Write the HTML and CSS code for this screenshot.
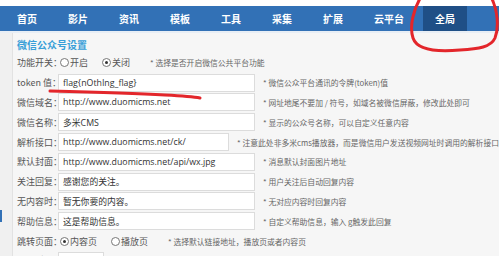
FILE: index.html
```html
<!DOCTYPE html>
<html lang="zh-CN">
<head>
    <meta charset="UTF-8">
    <meta name="viewport" content="width=device-width, initial-scale=1.0">
    <link rel="stylesheet" href="styles.css">
    <title>微信公众号设置</title>
</head>
<body>

    <div class="topbar"></div>

    <ul class="nav">
        <li>首页</li>
        <li>影片</li>
        <li>资讯</li>
        <li>模板</li>
        <li>工具</li>
        <li>采集</li>
        <li>扩展</li>
        <li>云平台</li>
        <li class="active">全局</li>
    </ul>

    <div class="main">
        <div class="side"><span class="side-mark"></span></div>

        <div class="content">
            <h3 class="title">微信公众号设置</h3>

            <div class="row">
                <label>功能开关：</label>
                <span class="radio"><i></i>开启</span>
                <span class="radio checked"><i></i>关闭</span>
                <span class="hint">* 选择是否开启微信公共平台功能</span>
            </div>
            <div class="row">
                <label>token 值：</label>
                <input type="text" value="flag{nOthIng_flag}">
                <span class="hint">* 微信公众平台通讯的令牌(token)值</span>
            </div>
            <div class="row">
                <label>微信域名：</label>
                <input type="text" value="http://www.duomicms.net">
                <span class="hint">* 网址地尾不要加 / 符号，如域名被微信屏蔽，修改此处即可</span>
            </div>
            <div class="row">
                <label>微信名称：</label>
                <input type="text" value="多米CMS">
                <span class="hint">* 显示的公众号名称，可以自定义任意内容</span>
            </div>
            <div class="row">
                <label>解析接口：</label>
                <input type="text" value="http://www.duomicms.net/ck/">
                <span class="hint">* 注意此处非多米cms播放器，而是微信用户发送视频网址时调用的解析接口</span>
            </div>
            <div class="row">
                <label>默认封面：</label>
                <input type="text" value="http://www.duomicms.net/api/wx.jpg">
                <span class="hint">* 消息默认封面图片地址</span>
            </div>
            <div class="row">
                <label>关注回复：</label>
                <input type="text" value="感谢您的关注。">
                <span class="hint">* 用户关注后自动回复内容</span>
            </div>
            <div class="row">
                <label>无内容时：</label>
                <input type="text" value="暂无你要的内容。">
                <span class="hint">* 无对应内容时回复内容</span>
            </div>
            <div class="row">
                <label>帮助信息：</label>
                <input type="text" value="这是帮助信息。">
                <span class="hint">* 自定义帮助信息，输入 g触发此回复</span>
            </div>
            <div class="row">
                <label>跳转页面：</label>
                <span class="radio checked"><i></i>内容页</span>
                <span class="radio"><i></i>播放页</span>
                <span class="hint">* 选择默认链接地址，播放页或者内容页</span>
            </div>
            <div class="row">
                <label>缓存时间：</label>
                <input type="text" class="short" value="">
                <span class="hint">* 设置回复内容缓存时间，单位为秒</span>
            </div>
        </div>
    </div>

    <svg class="marks" width="499" height="256" viewBox="0 0 499 256">
        <path d="M421,-3 C414,8 409,26 413,38 C417,50 438,52 460,50 C479,49 491,47 495,38 C499,28 498,10 491,-3" />
        <path d="M50,91 C90,92 130,93 165,95 C185,96 195,97 200,98" />
    </svg>

</body>
</html>
```

FILE: styles.css
```css
body {
    margin: 0;
    width: 499px;
    height: 256px;
    overflow: hidden;
    background-color: #f6f6f6;
    font-family: "Open Sans", "Noto Sans CJK SC", sans-serif;
    position: relative;
}

.topbar {
    height: 6px;
    background-color: #fff;
}

.nav {
    display: flex;
    gap: 7px;
    margin: 0;
    padding: 0 0 0 5px;
    height: 25px;
    list-style: none;
    background-color: #3271b6;
}

.nav li {
    padding: 0 12px;
    line-height: 25px;
    font-size: 10px;
    font-weight: bold;
    color: #fff;
    font-family: "Noto Sans CJK SC", sans-serif;
}

.nav li.active {
    background-color: #1f4f86;
}

.main {
    display: flex;
    border-top: 2px solid #e8eef5;
}

.side {
    width: 12px;
    height: 240px;
    background-color: #f0f0f0;
    border-right: 1px solid #e2e2e2;
    position: relative;
}

.side-mark {
    position: absolute;
    left: 0;
    top: 177px;
    width: 2px;
    height: 12px;
    background-color: #3271b6;
}

.content {
    flex: 1;
    padding: 5px 0 0 4px;
    white-space: nowrap;
    overflow: hidden;
}

.title {
    margin: 0 0 1px;
    font-size: 10px;
    line-height: 14px;
    font-weight: bold;
    color: #3a9fd8;
    font-family: "Noto Sans CJK SC", sans-serif;
}

.row {
    display: flex;
    align-items: center;
    height: 19.8px;
}

.row label {
    width: 41px;
    font-size: 9px;
    color: #555;
    font-family: "Noto Sans CJK SC", sans-serif;
}

.row input {
    width: 197px;
    height: 18px;
    box-sizing: border-box;
    margin: 0;
    padding: 0 4px;
    border: 1px solid #dcdcdc;
    background-color: #fff;
    font-family: "Open Sans", "Noto Sans CJK SC", sans-serif;
    font-size: 8.8px;
    color: #333;
}

.row input.short {
    width: 46px;
}

.hint {
    margin-left: 8px;
    font-size: 7.8px;
    color: #666;
    font-family: "Noto Sans CJK SC", sans-serif;
}

.radio {
    display: flex;
    align-items: center;
    margin: 0 12px 0 2px;
    font-size: 9px;
    color: #555;
    font-family: "Noto Sans CJK SC", sans-serif;
}

.radio i {
    width: 7px;
    height: 7px;
    margin-right: 1px;
    border: 1px solid #777;
    border-radius: 50%;
    background-color: #fff;
    position: relative;
}

.radio.checked i::after {
    content: "";
    position: absolute;
    left: 2px;
    top: 2px;
    width: 3px;
    height: 3px;
    border-radius: 50%;
    background-color: #333;
}

.marks {
    position: absolute;
    left: 0;
    top: 0;
    pointer-events: none;
}

.marks path {
    fill: none;
    stroke: #e3262b;
    stroke-width: 3;
    stroke-linecap: round;
}
```
